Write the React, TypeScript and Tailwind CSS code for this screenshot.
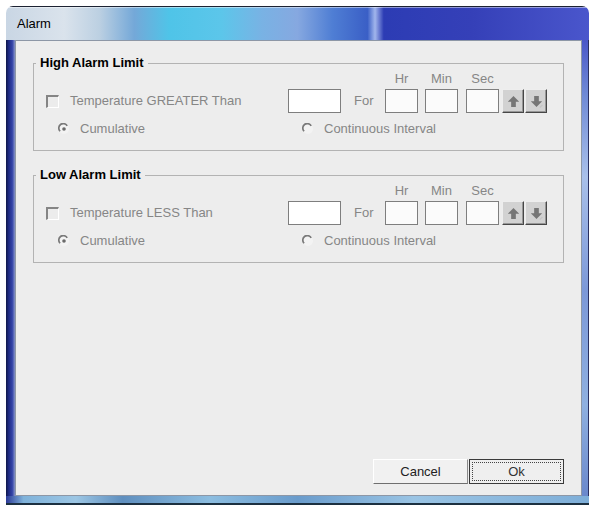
import React from "react";

const font = { fontFamily: '"Liberation Sans", Arial, sans-serif' };

function Radio({ checked }: { checked?: boolean }) {
  return (
    <svg width="12" height="12" viewBox="0 0 12 12" className="shrink-0">
      <circle cx="6" cy="6" r="5" fill="#f3f3f3" />
      <path d="M9.18 2.82 A4.5 4.5 0 1 0 2.1 8.25" fill="none" stroke="#7a7a7a" strokeWidth="1.7" />
      {checked && <circle cx="6" cy="6" r="1.8" fill="#6a6a6a" />}
    </svg>
  );
}

function Checkbox() {
  return (
    <div className="w-[13px] h-[13px] shrink-0 border-t-2 border-l-2 border-b border-r border-t-[#858585] border-l-[#858585] border-b-[#ffffff] border-r-[#ffffff] bg-[#ececec]" />
  );
}

function SpinButton({ down }: { down?: boolean }) {
  return (
    <div className="w-[22px] h-[24px] flex items-center justify-center bg-[#d2d2d2] border border-t-[#eeeeee] border-l-[#eeeeee] border-b-[#474747] border-r-[#474747] shadow-[inset_-1px_-1px_0_#979797]">
      <svg width="13" height="13" viewBox="0 0 10 10">
        {down ? (
          <>
            <path d="M5 9.2 L9.4 4.8 L6.8 4.8 L6.8 0.8 L3.2 0.8 L3.2 4.8 L0.6 4.8 Z" fill="#767676" />
            <path d="M7.6 9.6 L9.6 7.6" stroke="#c4c4c4" strokeWidth="1" />
          </>
        ) : (
          <path d="M5 0.8 L9.4 5.2 L6.8 5.2 L6.8 9.2 L3.2 9.2 L3.2 5.2 L0.6 5.2 Z" fill="#767676" />
        )}
      </svg>
    </div>
  );
}

function Group({ title, label }: { title: string; label: string }) {
  return (
    <fieldset className="mx-[17px] border border-[#b3b3b3] pb-[13px]">
      <legend className="ml-[2px] px-[4px] text-[13px] leading-[16px] font-bold text-black">{title}</legend>
      <div className="flex h-[16px] pl-[351px] text-[13px] leading-[16px] text-[#868686]">
        <div className="w-[33px] text-center">Hr</div>
        <div className="w-[33px] ml-[7px] text-center">Min</div>
        <div className="w-[33px] ml-[8px] text-center">Sec</div>
      </div>
      <div className="flex items-center h-[24px] mt-[2px] pl-[12px] text-[13px] text-[#868686]">
        <Checkbox />
        <div className="ml-[11px] w-[218px] whitespace-nowrap">{label}</div>
        <div className="w-[53px] h-[24px] bg-white border border-[#7e7e7e]" />
        <div className="ml-[13px] w-[31px]">For</div>
        <div className="w-[33px] h-[24px] bg-[#fbfbfb] border border-[#7e7e7e]" />
        <div className="ml-[7px] w-[33px] h-[24px] bg-[#fbfbfb] border border-[#7e7e7e]" />
        <div className="ml-[8px] w-[33px] h-[24px] bg-[#fbfbfb] border border-[#7e7e7e]" />
        <div className="ml-[3px] flex gap-[1px]">
          <SpinButton />
          <SpinButton down />
        </div>
      </div>
      <div className="flex items-center h-[16px] mt-[8px] pl-[24px] text-[13px] text-[#868686]">
        <Radio checked />
        <div className="ml-[10px] w-[222px]">Cumulative</div>
        <Radio />
        <div className="ml-[10px]">Continuous Interval</div>
      </div>
    </fieldset>
  );
}

export default function App() {
  return (
    <div className="w-[596px] h-[518px] bg-white pl-[6px] pt-[6px]" style={font}>
      <div className="w-[583px] h-[499px] flex flex-col rounded-t-[7px] overflow-hidden">
        <div className="h-[34px] shrink-0 flex items-center pl-[11px] border-t border-t-[#1c2232] bg-[linear-gradient(90deg,#c9d6e4_0%,#dae3ec_10%,#bcd0e2_16%,#74a8d8_22%,#4fc4e8_28%,#5cc6ea_37%,#79b2e4_44%,#86a8e0_50%,#4f7ed4_56%,#3a5fc6_62%,#a2b6ec_63.3%,#2c3cb4_64.8%,#3540b8_80%,#4a56cc_100%)] shadow-[inset_0_1px_0_rgba(255,255,255,0.45)]">
          <span className="text-[13px] text-black leading-none">Alarm</span>
        </div>
        <div className="flex h-[456px] shrink-0">
          <div className="w-[9px] bg-[linear-gradient(90deg,#0f1748_0%,#1f2b84_30%,#3444a8_70%,#8894c8_100%)]" />
          <div className="w-[567px] bg-[#ededed] border border-[#8d97a6] flex flex-col">
            <div className="mt-[14px]">
              <Group title="High Alarm Limit" label="Temperature GREATER Than" />
            </div>
            <div className="mt-[16px]">
              <Group title="Low Alarm Limit" label="Temperature LESS Than" />
            </div>
            <div className="flex-1" />
            <div className="flex justify-end pr-[17px] pb-[11px]">
              <div className="w-[95px] h-[25px] flex items-center justify-center text-[13px] text-[#222] bg-[#f1f1f1] border border-t-[#ffffff] border-l-[#ffffff] border-b-[#6f6f6f] border-r-[#8a8a8a]">
                Cancel
              </div>
              <div className="w-[95px] h-[25px] ml-[1px] p-[2px] bg-[#efefef] border border-[#3a3a3a]">
                <div className="w-full h-full flex items-center justify-center text-[13px] text-[#333] border border-dotted border-[#444]">
                  Ok
                </div>
              </div>
            </div>
          </div>
          <div className="w-[7px] bg-[linear-gradient(180deg,#4b58c8_0%,#6f8ad6_12%,#a9c0ea_30%,#7c98d8_55%,#8fb0e0_80%,#6a88cc_100%)] border-r border-r-[#2a3060]" />
        </div>
        <div className="h-[9px] shrink-0 bg-[linear-gradient(90deg,#2c3a98_0%,#7fb2da_3%,#9cc6e4_12%,#5f8fbf_20%,#8cbde0_35%,#6a9ccc_50%,#9ac4e4_70%,#7eaed8_100%)] border-b-2 border-b-[#1c3040]" />
      </div>
    </div>
  );
}
